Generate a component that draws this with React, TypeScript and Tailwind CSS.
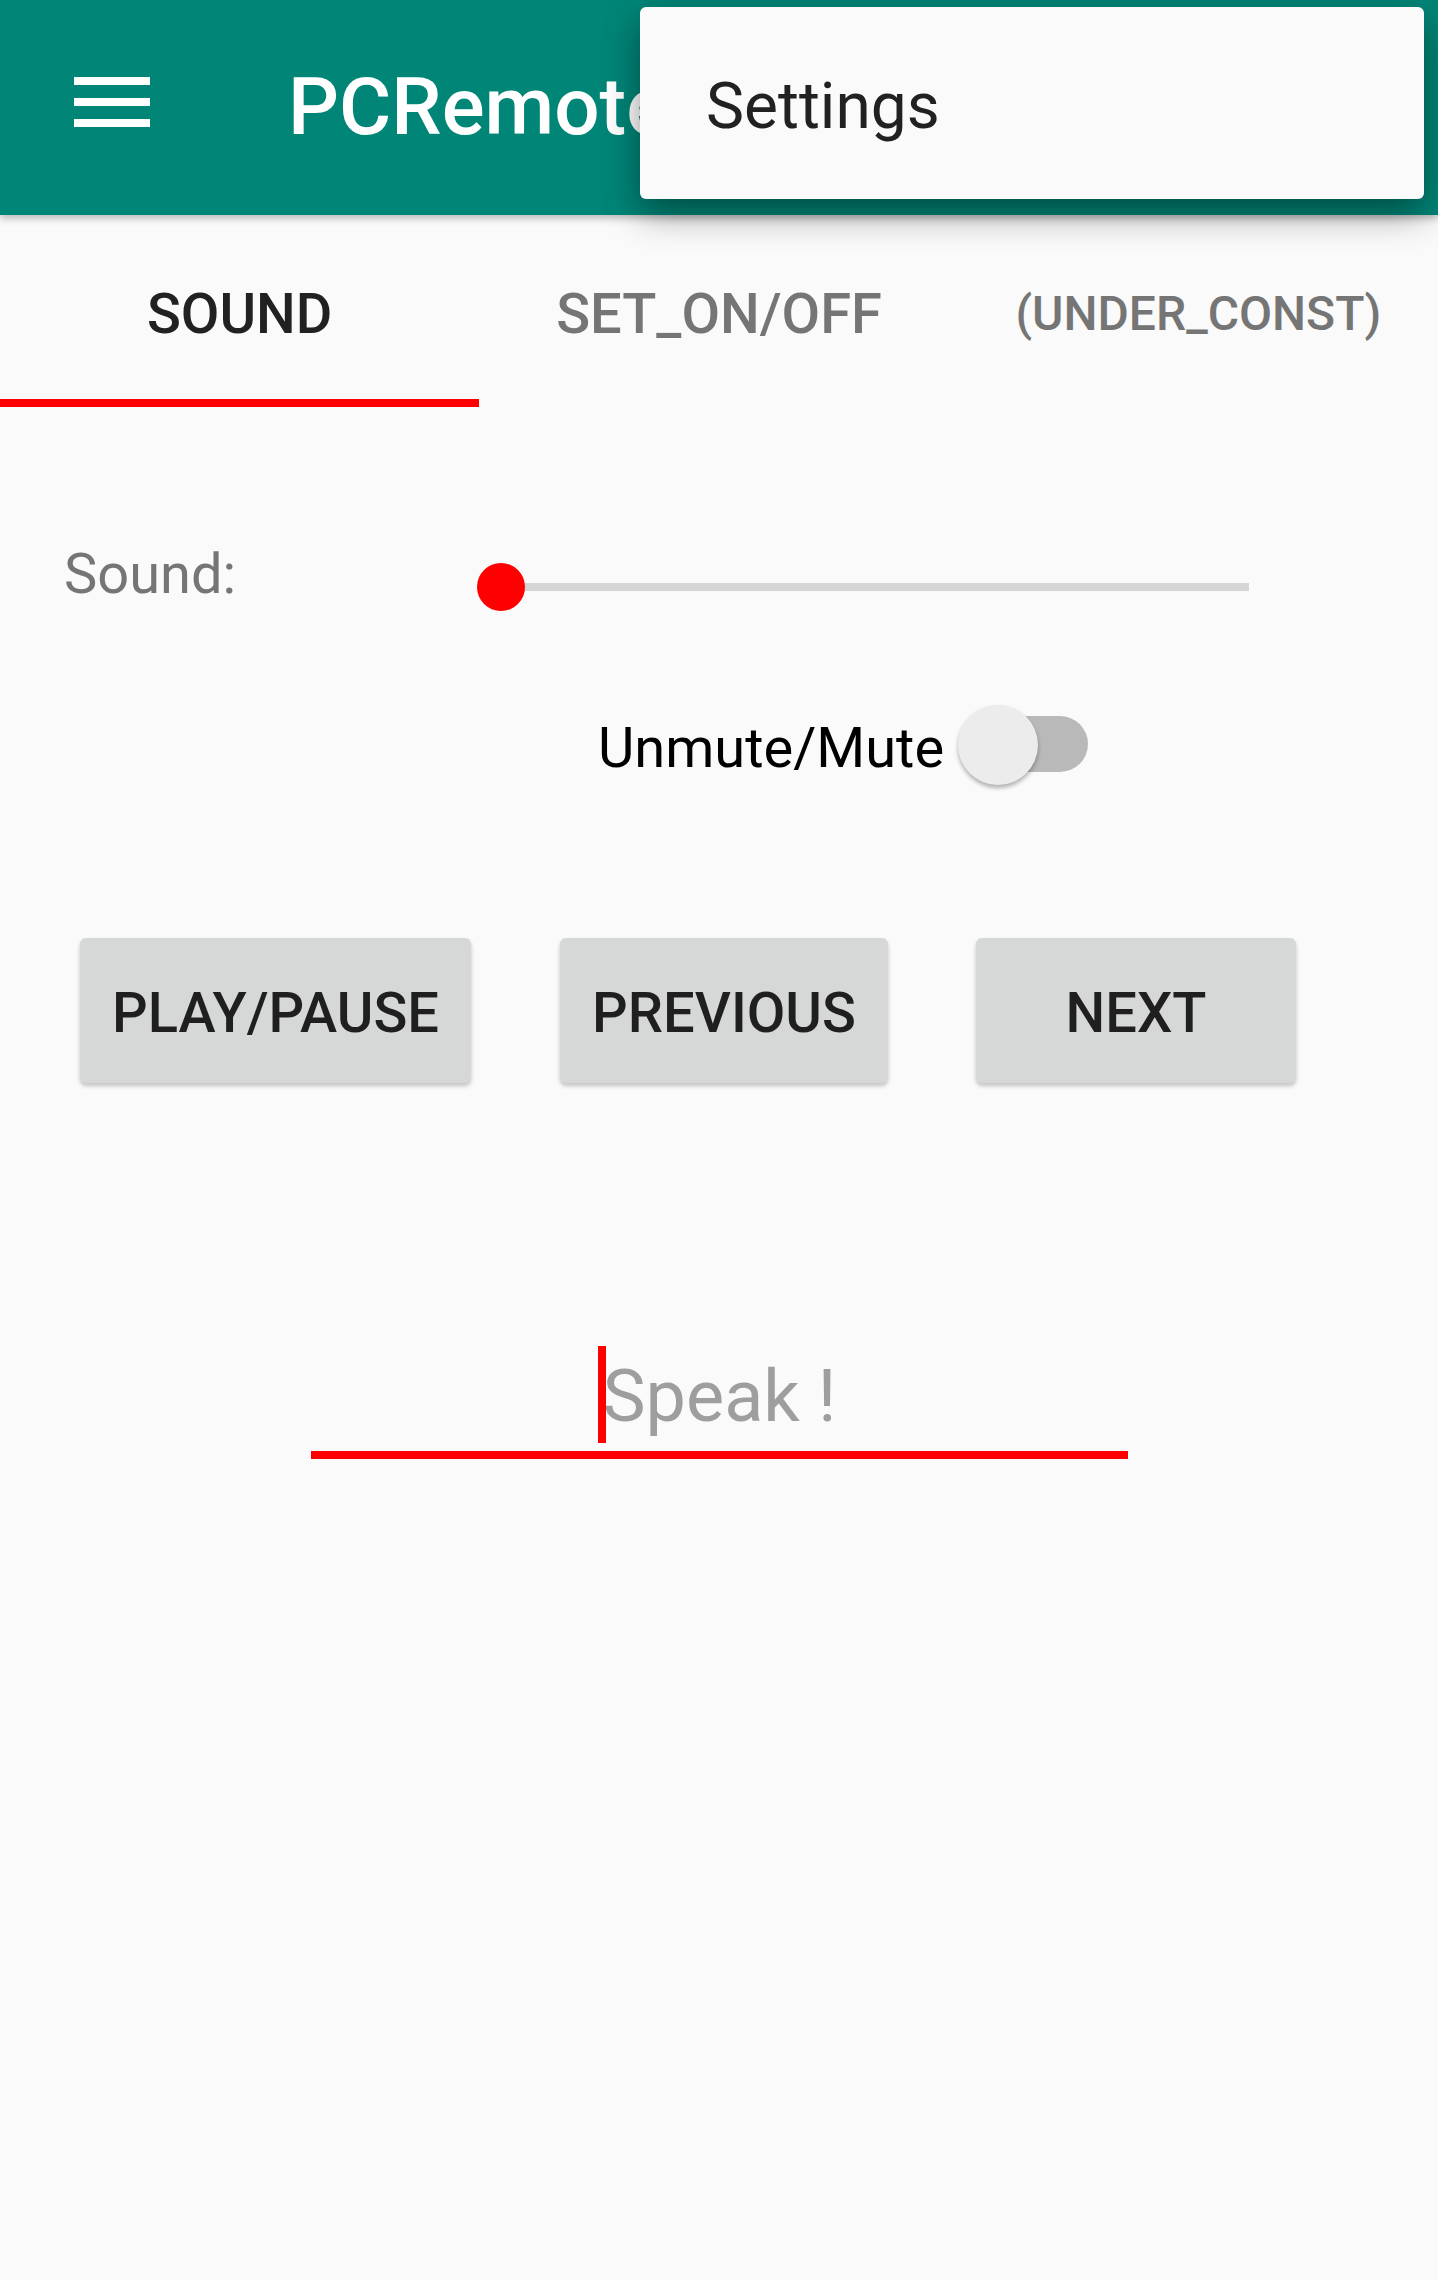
import React from "react";

function Tab({ label, active, size }: { label: string; active?: boolean; size: string }) {
  return (
    <div className="flex flex-col items-center">
      <div
        className={
          "pt-[66px] leading-[66px] font-medium " +
          size +
          " " +
          (active ? "text-[#212121]" : "text-[#757575]")
        }
      >
        {label}
      </div>
      <div className="flex-1" />
      <div className={"w-full h-[8px] " + (active ? "bg-[#ff0000]" : "bg-transparent")} />
    </div>
  );
}

function Btn({ label, w, ml }: { label: string; w: string; ml: string }) {
  return (
    <div
      className={
        "h-[145px] rounded-[6px] bg-[#d6d7d7] flex items-center justify-center shadow-[0_3px_4px_rgba(0,0,0,0.22)] " +
        w +
        " " +
        ml
      }
    >
      <span className="pt-[5px] text-[56px] leading-[66px] font-medium text-[#1f1f1f]">{label}</span>
    </div>
  );
}

export default function App() {
  return (
    <div className="relative w-[1438px] h-[2280px] overflow-hidden bg-[#fafafa] font-[Roboto]">
      {/* App bar */}
      <div className="relative z-10 h-[215px] bg-[#008577] flex items-start shadow-[0_3px_8px_rgba(0,0,0,0.28)]">
        <div className="ml-[74px] mt-[77px] w-[76px] flex flex-col gap-[13px]">
          <div className="h-[8px] bg-white" />
          <div className="h-[8px] bg-white" />
          <div className="h-[8px] bg-white" />
        </div>
        <div className="ml-[138px] mt-[60px] text-[80px] leading-[94px] font-medium text-white whitespace-nowrap">
          PCRemote
        </div>
      </div>

      {/* Overflow menu */}
      <div className="absolute z-20 left-[640px] top-[7px] w-[784px] h-[192px] rounded-[6px] bg-[#fafafa] shadow-[0_14px_36px_rgba(0,0,0,0.42)]">
        <div className="pl-[66px] pt-[62px] text-[64px] leading-[75px] text-[#212121]">Settings</div>
      </div>

      {/* Tabs */}
      <div className="grid grid-cols-3 h-[192px]">
        <Tab label="SOUND" active size="text-[56px]" />
        <Tab label="SET_ON/OFF" size="text-[56px]" />
        <Tab label="(UNDER_CONST)" size="text-[48px]" />
      </div>

      {/* Sound row */}
      <div className="mt-[134px] flex items-start pl-[64px]">
        <div className="w-[413px] text-[56px] leading-[66px] text-[#757575]">Sound:</div>
        <div className="relative mt-[22px] w-[772px] h-[48px]">
          <div className="absolute left-[24px] top-[20px] w-[748px] h-[8px] bg-[#d6d6d6]" />
          <div className="absolute left-0 top-0 w-[48px] h-[48px] rounded-full bg-[#ff0000]" />
        </div>
      </div>

      {/* Switch row */}
      <div className="mt-[94px] h-[80px] flex items-center pl-[598px]">
        <div className="mt-[6px] text-[56px] leading-[66px] text-black whitespace-nowrap">Unmute/Mute</div>
        <div className="relative ml-[14px] w-[130px] h-[80px]">
          <div className="absolute right-0 top-[11px] w-[120px] h-[56px] rounded-full bg-[#b9b9b9]" />
          <div className="absolute left-0 top-0 w-[80px] h-[80px] rounded-full bg-[#ececec] shadow-[0_3px_4px_rgba(0,0,0,0.3)]" />
        </div>
      </div>

      {/* Buttons */}
      <div className="mt-[153px] flex pl-[80px]">
        <Btn label="PLAY/PAUSE" w="w-[391px]" ml="" />
        <Btn label="PREVIOUS" w="w-[328px]" ml="ml-[89px]" />
        <Btn label="NEXT" w="w-[320px]" ml="ml-[88px]" />
      </div>

      {/* Speak edit text */}
      <div className="mt-[263px] ml-[311px] w-[817px] flex flex-col">
        <div className="flex justify-center items-start">
          <div className="w-[8px] h-[97px] bg-[#ff0000] ml-[-5px] mr-[-3px] relative z-10" />
          <div className="mt-[9px] text-[72px] leading-[84px] text-[#9e9e9e] whitespace-nowrap">Speak !</div>
        </div>
        <div className="mt-[8px] h-[8px] bg-[#ff0000]" />
      </div>
    </div>
  );
}
